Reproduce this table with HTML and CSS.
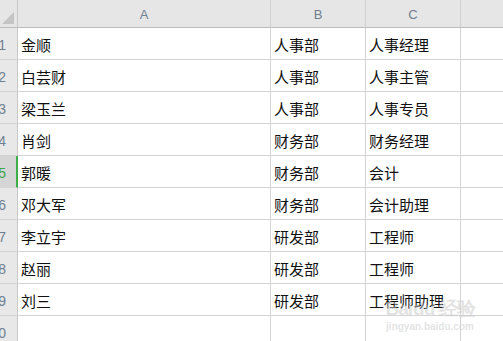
FILE: index.html
```html
<!DOCTYPE html>
<html lang="zh">
<head>
<meta charset="utf-8">
<link rel="stylesheet" href="styles.css">
</head>
<body>
<div class="sheet">
  <div class="grid">
    <div class="corner"><span class="tri"></span></div>
    <div class="colhead">A</div>
    <div class="colhead">B</div>
    <div class="colhead">C</div>
    <div class="colhead last"></div>

    <div class="rowhead"><span>1</span></div><div class="cell">金顺</div><div class="cell">人事部</div><div class="cell">人事经理</div><div class="cell last"></div>
    <div class="rowhead"><span>2</span></div><div class="cell">白芸财</div><div class="cell">人事部</div><div class="cell">人事主管</div><div class="cell last"></div>
    <div class="rowhead"><span>3</span></div><div class="cell">梁玉兰</div><div class="cell">人事部</div><div class="cell">人事专员</div><div class="cell last"></div>
    <div class="rowhead"><span>4</span></div><div class="cell">肖剑</div><div class="cell">财务部</div><div class="cell">财务经理</div><div class="cell last"></div>
    <div class="rowhead active"><span>5</span></div><div class="cell">郭暖</div><div class="cell">财务部</div><div class="cell">会计</div><div class="cell last"></div>
    <div class="rowhead"><span>6</span></div><div class="cell">邓大军</div><div class="cell">财务部</div><div class="cell">会计助理</div><div class="cell last"></div>
    <div class="rowhead"><span>7</span></div><div class="cell">李立宇</div><div class="cell">研发部</div><div class="cell">工程师</div><div class="cell last"></div>
    <div class="rowhead"><span>8</span></div><div class="cell">赵丽</div><div class="cell">研发部</div><div class="cell">工程师</div><div class="cell last"></div>
    <div class="rowhead"><span>9</span></div><div class="cell">刘三</div><div class="cell">研发部</div><div class="cell">工程师助理</div><div class="cell last"></div>
    <div class="rowhead"><span>10</span></div><div class="cell"></div><div class="cell"></div><div class="cell"></div><div class="cell last"></div>
  </div>
  <div class="watermark">
    <div class="wm-logo">Bai<span class="paw">du</span> 经验</div>
    <div class="wm-url">jingyan.baidu.com</div>
  </div>
</div>
</body>
</html>
```

FILE: styles.css
```css
html, body {
  margin: 0;
  padding: 0;
  background: #ffffff;
  overflow: hidden;
}
.sheet {
  position: relative;
  width: 503px;
  height: 341px;
  overflow: hidden;
  font-family: "Noto Sans CJK SC", "Noto Sans", sans-serif;
}
.grid {
  display: grid;
  grid-template-columns: 18px 253px 95px 95px 60px;
  grid-template-rows: 28px repeat(10, 32px);
}
.corner {
  position: relative;
  background: #e6e6e6;
  border-right: 1px solid #c8c8c8;
  border-bottom: 1px solid #bcbcbc;
  overflow: hidden;
}
.tri {
  position: absolute;
  right: 3px;
  bottom: 3px;
  width: 0;
  height: 0;
  border-left: 12px solid transparent;
  border-bottom: 12px solid #c4c4c4;
}
.colhead {
  background: #e6e6e6;
  border-right: 1px solid #cfcfcf;
  border-bottom: 1px solid #bcbcbc;
  color: #6f7f90;
  font-family: "Liberation Sans", Arial, sans-serif;
  font-size: 13px;
  display: flex;
  align-items: center;
  justify-content: center;
  padding-top: 2px;
  box-sizing: border-box;
}
.rowhead {
  background: #e8e8e8;
  border-right: 1px solid #c8c8c8;
  border-bottom: 1px solid #d4d4d4;
  color: #6f7f90;
  font-family: "Liberation Sans", Arial, sans-serif;
  font-size: 14px;
  display: flex;
  align-items: center;
  justify-content: flex-end;
  overflow: hidden;
  padding-right: 11px;
  padding-top: 3px;
  box-sizing: border-box;
}
.rowhead span {
  white-space: nowrap;
}
.rowhead.active {
  background: #d5d5d5;
  color: #3aa74a;
  border-right: 2px solid #3fae49;
  padding-right: 10px;
}
.cell {
  border-right: 1px solid #d4d4d4;
  border-bottom: 1px solid #d4d4d4;
  font-size: 15px;
  color: #111111;
  display: flex;
  align-items: center;
  padding-left: 3px;
  padding-top: 1px;
  box-sizing: border-box;
  white-space: nowrap;
}
.cell.last, .colhead.last {
  border-right: none;
}
.watermark {
  position: absolute;
  left: 385px;
  top: 299px;
  width: 90px;
  text-align: center;
  color: rgba(200, 200, 200, 0.5);
  pointer-events: none;
}
.wm-logo {
  font-family: "Liberation Sans", Arial, sans-serif;
  font-weight: bold;
  font-size: 19px;
  line-height: 20px;
  letter-spacing: -1px;
  white-space: nowrap;
}
.wm-logo .paw {
  margin-left: 1px;
}
.wm-url {
  font-family: "Liberation Sans", Arial, sans-serif;
  font-weight: bold;
  font-size: 10px;
  line-height: 12px;
  margin-top: 2px;
  white-space: nowrap;
}
```
